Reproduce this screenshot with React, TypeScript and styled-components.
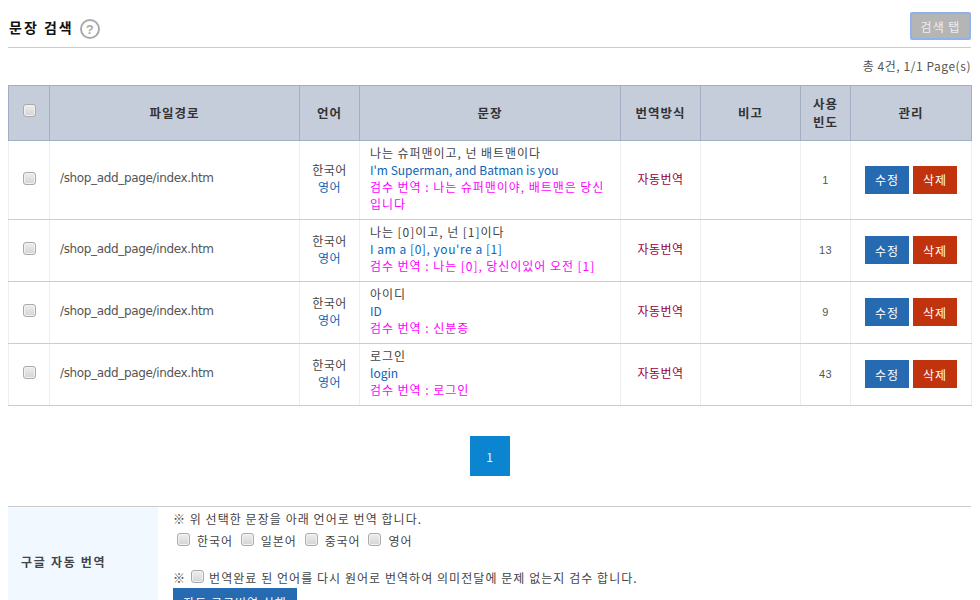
import React from "react";
import styled, { createGlobalStyle } from "styled-components";

const Global = createGlobalStyle`
  html, body { margin: 0; padding: 0; height: 600px; overflow: hidden; background: #fff; }
  body { font-family: "Noto Sans CJK KR", "Noto Sans", sans-serif; font-size: 12px; color: #444; }
`;
const Page = styled.div`padding: 0 9px 0 8px;`;
const TitleBar = styled.div`
  height: 48px; box-sizing: border-box; border-bottom: 1px solid #ccc;
  display: flex; align-items: flex-start; justify-content: space-between; padding-top: 12px;
`;
const TitleGroup = styled.div`display: flex; align-items: center; gap: 6px; padding: 7px 0 0 1px;`;
const Title = styled.h1`margin: 0; font-size: 14px; line-height: 16px; padding-bottom: 4px; font-weight: 700; color: #111; letter-spacing: 2px;`;
const Help = styled.span`
  width: 16px; height: 16px; border: 2px solid #aaa; border-radius: 50%; color: #aaa;
  display: flex; align-items: center; justify-content: center; font: 700 13px "Liberation Sans", sans-serif;
`;
const TabButton = styled.button`
  width: 61px; height: 28px; background: #b5b5b5; color: #eee; padding: 0;
  border: 2px solid #8fb2ea; border-radius: 2px; font: 12px "Noto Sans CJK KR", sans-serif; letter-spacing: 1px;
`;
const Count = styled.div`height: 37px; line-height: 35px; text-align: right; font-size: 12px; color: #555; letter-spacing: .55px;`;
const Table = styled.table`
  width: 963px; table-layout: fixed; border-collapse: collapse; font-size: 12px;
`;
const Th = styled.th`
  background: #c5cddb; border: 1px solid #a2aec4; color: #333; font-size: 12.5px; font-weight: 700; line-height: 18px; padding: 0; text-align: center; letter-spacing: 1px;
`;
const CheckTh = styled(Th)`padding-bottom: 3px;`;
const HeadRow = styled.tr`height: 55px;`;
const Row = styled.tr<{ $h: number }>`height: ${p => p.$h}px;`;
const Td = styled.td`
  border: 1px solid #eee; border-bottom: 1px solid #ccc; text-align: center; padding: 0 0 4px; line-height: 17px; color: #444; letter-spacing: .5px;
`;
const CheckTd = styled(Td)`padding-bottom: 2px;`;
const PathCell = styled(Td)`text-align: left; padding: 0 0 4px 10px; font: 12px "DejaVu Sans", sans-serif; letter-spacing: -.35px; color: #555;`;
const SentenceCell = styled(Td)`text-align: left; padding: 1px 10px 5px; letter-spacing: .95px;`;
const Check = styled.input.attrs({ type: "checkbox" })`
  appearance: none; width: 13px; height: 13px; margin: 0 0 4px; vertical-align: middle; border-radius: 3px; flex: none;
  border: 1px solid #aaa; background: linear-gradient(#eee, #d4d4d4); box-shadow: inset 0 0 0 1px #f2f2f2;
`;
const Blue = styled.div`color: #0c64b8;`;
const BlueLatin = styled.div<{ $sp: number }>`color: #0c64b8; letter-spacing: ${p => p.$sp}px;`;
const Pink = styled.div`color: #f0f;`;
const Method = styled.span`color: #95003c;`;
const Small = styled.span`color: #555; font: 11px "Liberation Sans", sans-serif;`;
const Actions = styled.div`display: flex; justify-content: center; gap: 4px; padding-top: 3px;`;
const Act = styled.button<{ $c: string }>`
  width: 44px; height: 28px; border: 0; padding: 0; background: ${p => p.$c}; color: #fff; font: 12px "Noto Sans CJK KR", sans-serif; letter-spacing: 1px;
`;
const Pager = styled.div`display: flex; justify-content: center; padding: 30px 0 30px;`;
const PageNo = styled.span`
  width: 40px; height: 40px; background: #0b85cf; color: #dff; display: flex; align-items: center; justify-content: center; font-size: 12px;
`;
const Section = styled.div`border-top: 1px solid #ccc; display: flex; height: 140px;`;
const SectionLabel = styled.div`
  width: 150px; background: #f1f8ff; color: #444; font-weight: 700; font-size: 12px; letter-spacing: 1.7px; padding: 46px 0 0 13px; box-sizing: border-box;
`;
const SectionBody = styled.div`padding: 3px 0 0 15px; line-height: 18px; color: #444; letter-spacing: 1.05px;`;
const Line = styled.div`height: 18px; white-space: nowrap;`;
const Options = styled.div`display: flex; height: 22px; padding: 2px 0 0 4px; gap: 8px; align-items: center; margin-bottom: 17px;`;
const Option = styled.label`display: flex; align-items: center; gap: 7px; letter-spacing: .9px;`;
const Verify = styled.div`display: flex; align-items: center; gap: 5px; height: 18px; white-space: nowrap;`;
const Run = styled.button`
  width: 124px; height: 28px; margin-top: 1px; border: 0; background: #266bb1; color: #fff; font: 12px "Noto Sans CJK KR", sans-serif; display: block; letter-spacing: 1px; padding: 0;
`;

const rows = [
  { h: 79, src: "나는 슈퍼맨이고, 넌 배트맨이다", en: "I'm Superman, and Batman is you", sp: 0, chk: "나는 슈퍼맨이야, 배트맨은 당신 입니다", n: 1 },
  { h: 62, src: "나는 [0]이고, 넌 [1]이다", en: "I am a [0], you're a [1]", sp: 0.55, chk: "나는 [0], 당신이있어 오전 [1]", n: 13 },
  { h: 62, src: "아이디", en: "ID", sp: 0, chk: "신분증", n: 9 },
  { h: 62, src: "로그인", en: "login", sp: 0, chk: "로그인", n: 43 },
];
const widths = [41, 250, 60, 261, 80, 100, 50, 121];

export default function App() {
  return (
    <Page>
      <Global />
      <TitleBar>
        <TitleGroup><Title>문장 검색</Title><Help>?</Help></TitleGroup>
        <TabButton>검색 탭</TabButton>
      </TitleBar>
      <Count>총 4건, 1/1 Page(s)</Count>
      <Table>
        <colgroup>{widths.map((w, i) => <col key={i} style={{ width: w }} />)}</colgroup>
        <thead>
          <HeadRow>
            <CheckTh><Check /></CheckTh><Th>파일경로</Th><Th>언어</Th><Th>문장</Th><Th>번역방식</Th><Th>비고</Th><Th>사용<br />빈도</Th><Th>관리</Th>
          </HeadRow>
        </thead>
        <tbody>
          {rows.map((r, i) => (
            <Row $h={r.h} key={i}>
              <CheckTd><Check /></CheckTd>
              <PathCell>/shop_add_page/index.htm</PathCell>
              <Td>한국어<Blue>영어</Blue></Td>
              <SentenceCell>
                {r.src}
                <BlueLatin $sp={r.sp}>{r.en}</BlueLatin>
                <Pink>검수 번역 : {r.chk}</Pink>
              </SentenceCell>
              <Td><Method>자동번역</Method></Td>
              <Td />
              <Td><Small>{r.n}</Small></Td>
              <Td><Actions><Act $c="#266bb1">수정</Act><Act $c="#c0330c">삭제</Act></Actions></Td>
            </Row>
          ))}
        </tbody>
      </Table>
      <Pager><PageNo>1</PageNo></Pager>
      <Section>
        <SectionLabel>구글 자동 번역</SectionLabel>
        <SectionBody>
          <Line>※ 위 선택한 문장을 아래 언어로 번역 합니다.</Line>
          <Options>
            {["한국어", "일본어", "중국어", "영어"].map(l => <Option key={l}><Check />{l}</Option>)}
          </Options>
          <Verify>※ <Check />번역완료 된 언어를 다시 원어로 번역하여 의미전달에 문제 없는지 검수 합니다.</Verify>
          <Run>자동 구글번역 실행</Run>
        </SectionBody>
      </Section>
    </Page>
  );
}
